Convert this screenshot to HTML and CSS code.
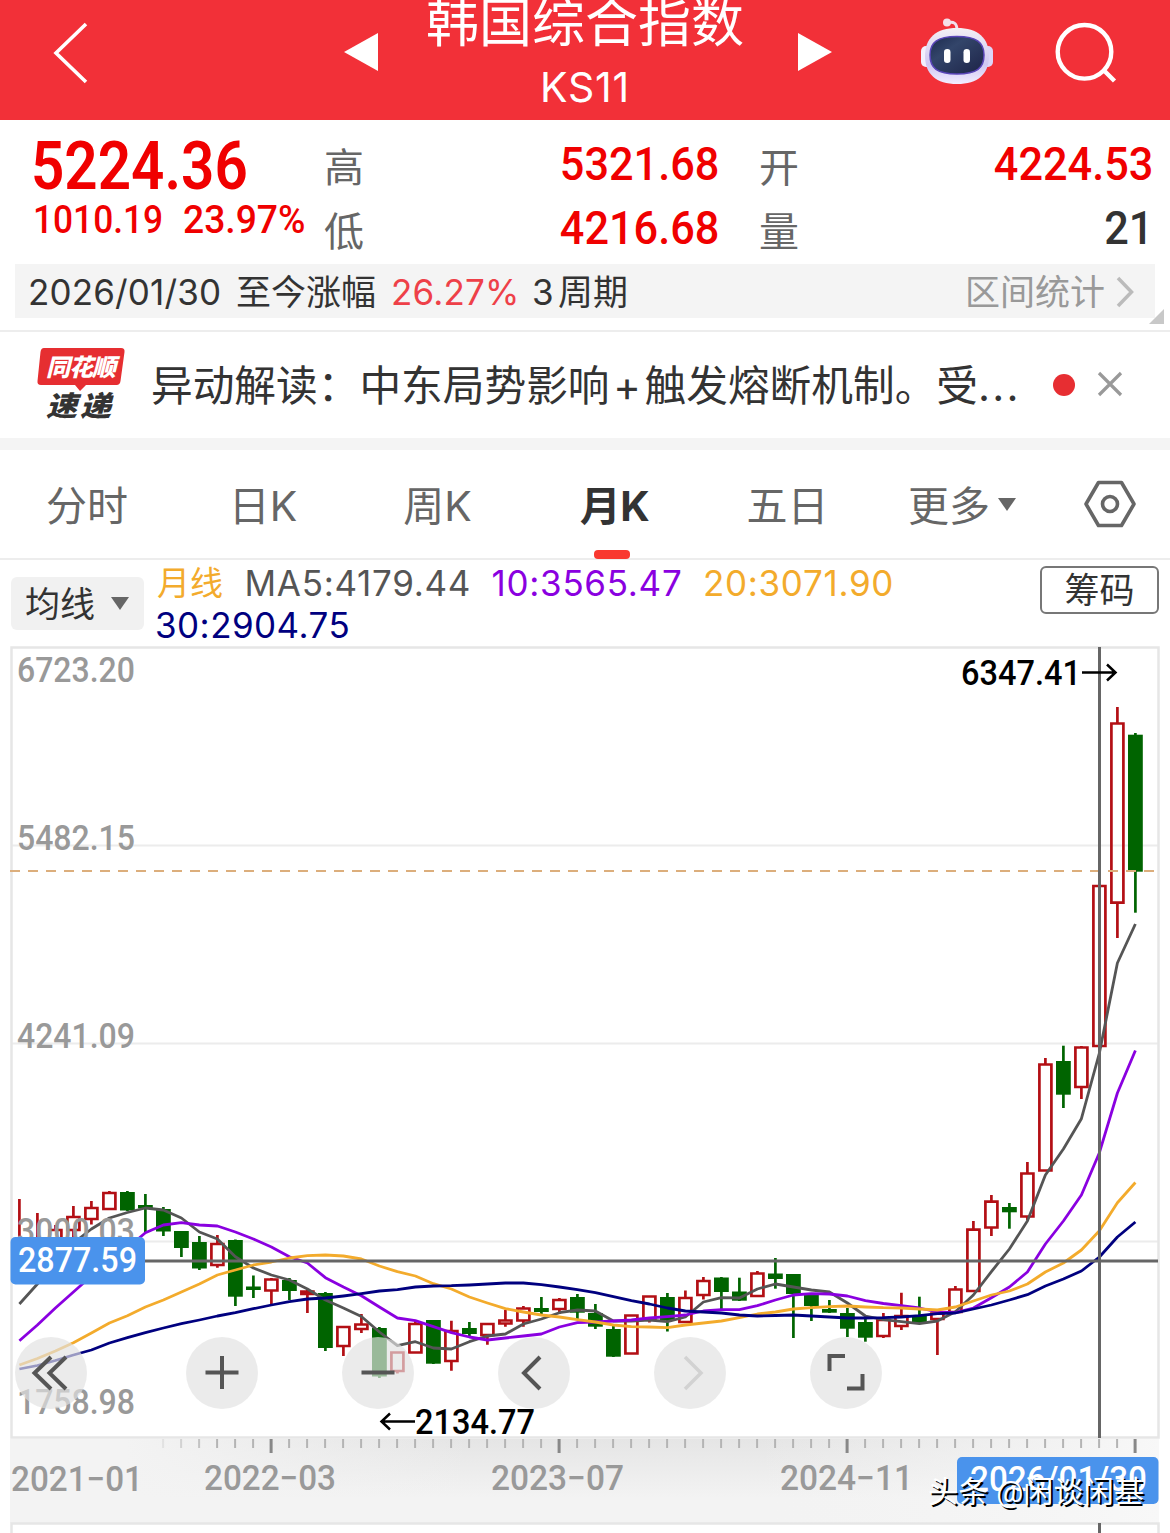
FILE: index.html
```html
<!DOCTYPE html>
<html lang="zh-CN">
<head>
<meta charset="utf-8">
<title>韩国综合指数 KS11</title>
<link rel="stylesheet" href="styles.css">
</head>
<body>
<header class="topbar">
  <svg class="back" width="40" height="66" viewBox="0 0 40 66"><path d="M35 4 5 33 35 62" fill="none" stroke="#fff" stroke-width="3.6"/></svg>
  <svg class="prev" width="34" height="38" viewBox="0 0 34 38"><path d="M34 0v38L0 19z" fill="#fff"/></svg>
  <div class="title">
    <h1>韩国综合指数</h1>
    <p>KS11</p>
  </div>
  <svg class="next" width="34" height="38" viewBox="0 0 34 38"><path d="M0 0v38l34-19z" fill="#fff"/></svg>
  <svg class="robot" width="76" height="70" viewBox="919 16 76 70">
    <defs>
      <linearGradient id="shell" x1="0" y1="0" x2="0" y2="1"><stop offset="0" stop-color="#f4f0f4"/><stop offset=".65" stop-color="#cfc6f2"/><stop offset="1" stop-color="#f3edff"/></linearGradient>
      <linearGradient id="visor" x1="0" y1="0" x2="1" y2="1"><stop offset="0" stop-color="#1c2a4e"/><stop offset=".35" stop-color="#33456a"/><stop offset="1" stop-color="#1d2347"/></linearGradient>
    </defs>
    <path d="M948 23c5-2 9 0 9 7" fill="none" stroke="#f1dfec" stroke-width="3"/>
    <circle cx="947" cy="22.500" r="4" fill="#f5dfe8"/>
    <rect x="921" y="46" width="12" height="21" rx="5" fill="#f3effc"/>
    <rect x="981" y="46" width="12" height="21" rx="5" fill="#dcd5f8"/>
    <path d="M957 28c21 0 32 10 32 28s-11 28-32 28-32-10-32-28 11-28 32-28z" fill="url(#shell)"/>
    <path d="M957 36.500c20 0 27 6 27 18.500 0 13-7 19-27 19s-27-6-27-19c0-12.500 7-18.500 27-18.500z" fill="url(#visor)" stroke="#5a45b8" stroke-width="1.500"/>
    <rect x="944" y="49" width="6.500" height="14" rx="3.200" fill="#fff"/>
    <rect x="963.500" y="49" width="6.500" height="14" rx="3.200" fill="#fff"/>
  </svg>
  <svg class="search" width="64" height="62" viewBox="1054 21 64 62"><g fill="none" stroke="#fff" stroke-width="4.400"><circle cx="1084.500" cy="51.800" r="26.800"/><path d="M1103 69.500 1114.500 81"/></g></svg>
</header>

<section class="quote">
  <div class="last">
    <div class="price"><span class="din">5224.36</span></div>
    <div class="change"><span class="din">1010.19</span><span class="din pct">23.97%</span></div>
  </div>
  <dl class="stats">
    <dt>高</dt><dd><span class="din">5321.68</span></dd>
    <dt>开</dt><dd><span class="din">4224.53</span></dd>
    <dt>低</dt><dd><span class="din">4216.68</span></dd>
    <dt>量</dt><dd class="neutral"><span class="din">21</span></dd>
  </dl>
</section>

<section class="range">
  <span class="r-date">2026/01/30</span><span class="r-label">至今涨幅</span><span class="r-pct">26.27%</span><span class="r-num">3</span><span>周期</span>
  <span class="r-link">区间统计</span>
  <svg width="18" height="32" viewBox="0 0 18 32"><path d="M2 2 15.500 16 2 30" fill="none" stroke="#bbb" stroke-width="3.500"/></svg>
  <i class="corner"></i>
</section>

<section class="news">
  <div class="logo">
    <svg width="90" height="48" viewBox="0 0 90 48"><path d="M8 1h77q4 0 3.500 4l-4 29q-.5 4-4 4H50l-6 6-5-6H5q-4 0-3.500-4l3-29Q5 1 8 1z" fill="#e62e31"/></svg>
    <b class="logo-a">同花顺</b>
    <b class="logo-b">速递</b>
  </div>
  <p>异动解读：中东局势影响<span class="plus">+</span>触发熔断机制。受<span class="dots">...</span></p>
  <i class="dot"></i>
  <svg class="close" width="26" height="26" viewBox="0 0 26 26"><path d="M2 2 24 24M24 2 2 24" stroke="#999" stroke-width="3.200"/></svg>
</section>

<nav class="tabs">
  <span>分时</span><span>日K</span><span>周K</span><span class="active">月K</span><span>五日</span>
  <span class="more">更多<i class="caret"></i></span>
  <svg width="52" height="48" viewBox="0 0 52 48"><g fill="none" stroke="#666" stroke-width="3.600"><path d="M14.500 2.500h23L50 24 37.500 45.500h-23L2 24z" stroke-linejoin="round"/><circle cx="26" cy="24" r="7.500"/></g></svg>
</nav>

<section class="ma">
  <div class="select">均线<i class="caret"></i></div>
  <div class="legend">
    <div><span class="c20 cn">月线</span><span class="c5">MA5:4179.44</span><span class="c10">10:3565.47</span><span class="c20">20:3071.90</span></div>
    <div><span class="c30">30:2904.75</span></div>
  </div>
  <div class="chips">筹码</div>
</section>

<svg class="chart" id="chart" width="1170" height="887" viewBox="0 646 1170 887"></svg>
<script src="chart.js"></script>
</body>
</html>
```
FILE: styles.css
```css
* { box-sizing: border-box; margin: 0; padding: 0; }
body {
  width: 1170px;
  height: 1533px;
  overflow: hidden;
  background: #fff;
  color: #333;
  font-family: Inter, "Noto Sans CJK SC", sans-serif;
}
svg { display: block; flex: none; }
i { font-style: normal; }
.din { display: inline-block; font-family: Roboto, sans-serif; transform: scaleX(.92); transform-origin: left; }

.topbar { display: flex; height: 120px; background: #f23038; color: #fff; }
.back { margin: 20px 0 0 51px; }
.prev { margin: 33px 0 0 253px; }
.title { width: 420px; padding-right: 6px; text-align: center; white-space: nowrap; }
.title h1 { margin-top: -9px; font-size: 53px; line-height: 64px; font-weight: 400; }
.title p { margin-top: 6px; font-size: 41px; line-height: 52px; letter-spacing: .8px; }
.next { margin-top: 33px; }
.robot { margin: 16px 0 0 87px; }
.search { margin: 21px 0 0 59px; }

.quote { display: flex; height: 144px; color: #f00000; white-space: nowrap; }
.last { width: 324px; padding-left: 31px; }
.price { height: 76px; padding-top: 10px; font-size: 66px; line-height: 70px; font-weight: 600; }
.price .din { transform: scaleX(.885); }
.change { display: flex; padding-left: 2px; font-size: 39px; line-height: 48px; font-weight: 500; }
.change .din { flex: none; width: 150px; transform: scaleX(.905); }
.change .pct { width: 124px; transform: scaleX(.955); }
.stats { display: grid; grid-template-columns: 60px 335px 100px 334px; grid-template-rows: 64px 64px; padding-top: 11px; line-height: 64px; }
.stats dt { color: #666; font-size: 40px; padding-top: 5px; }
.stats dt:nth-of-type(even) { padding-left: 40px; }
.stats dd { text-align: right; font-size: 47px; font-weight: 500; }
.stats .din { transform-origin: right; }
.stats .neutral { color: #333; }

.range { position: relative; display: flex; align-items: center; width: 1140px; height: 54px; margin-left: 15px; padding: 1px 0 0 13px; background: #f4f4f4; font-size: 35px; line-height: 52px; white-space: nowrap; }
.r-date { width: 208px; letter-spacing: .15px; }
.r-label { width: 155px; }
.r-pct { width: 141px; color: #ee4048; letter-spacing: .2px; }
.r-num { width: 26px; }
.r-link { margin-left: auto; padding-right: 11px; color: #999; }
.range svg { margin-right: 21px; }
.corner { position: absolute; right: -9px; bottom: -6px; border-left: 15px solid transparent; border-bottom: 15px solid #c8c8c8; }

.news { display: flex; align-items: center; height: 120px; margin-top: 12px; padding-left: 36px; border-top: 2px solid #ededed; border-bottom: 12px solid #f4f4f4; }
.logo { position: relative; width: 115px; height: 76px; white-space: nowrap; }
.logo b { position: absolute; font-style: italic; font-weight: 900; }
.logo-a { left: 10px; top: 6px; color: #fff; font-size: 24px; line-height: 30px; letter-spacing: -1px; }
.logo-b { left: 10px; top: 42px; color: #333; font-size: 31px; line-height: 34px; letter-spacing: 3px; transform: scaleY(.9); }
.news p { width: 902px; padding-top: 2px; font-size: 41.700px; line-height: 60px; white-space: nowrap; }
.plus { display: inline-block; width: 35px; text-align: center; }
.dots { letter-spacing: 2.200px; }
.dot { width: 22px; height: 22px; margin-right: 22px; border-radius: 50%; background: #e72e32; }
.close { margin-top: -2px; }

.tabs { display: grid; grid-template-columns: 174px 178px 171px 183px 163px 213px 60px; align-items: center; height: 110px; border-bottom: 2px solid #ededed; color: #666; font-size: 41px; line-height: 108px; text-align: center; }
.tabs span { padding-top: 2px; }
.tabs svg { margin: -2px 0 0 2px; }
.tabs .active { position: relative; color: #333; font-weight: 700; letter-spacing: -.4px; }
.active::after { content: ""; position: absolute; left: 71px; bottom: 1px; width: 36px; height: 9px; border-radius: 4px; background: #f9382f; }
.tabs .more { padding-left: 39px; text-align: left; }
.caret { display: inline-block; border: 9px solid transparent; border-top: 13px solid #666; border-bottom: 0; }
.more .caret { margin-left: 8px; vertical-align: 10px; }

.ma { display: flex; height: 86px; padding-left: 11px; }
.select { width: 133px; height: 53px; margin-top: 17px; padding: 1px 0 0 14px; border-radius: 6px; background: #f1f1f1; font-size: 35px; line-height: 53px; }
.select .caret { margin-left: 16px; vertical-align: 7px; }
.legend { width: 896px; padding: 3px 0 0 12px; font-size: 35px; line-height: 41px; letter-spacing: .7px; white-space: nowrap; }
.legend div { display: flex; gap: 20.500px; height: 42px; }
.cn { padding-left: 1px; margin-right: 1px; font-size: 33px; letter-spacing: 0; }
.c5 { color: #555; }
.c10 { color: #8a00e0; }
.c20 { color: #f3ab2c; }
.c30 { color: #00007f; letter-spacing: .45px; margin-left: -1px; }
.chips { width: 119px; height: 48px; margin-top: 6px; border: 2px solid #777; border-radius: 6px; font-size: 35px; line-height: 44px; text-align: center; }

.chart text { font-family: Roboto, "Noto Sans CJK SC", sans-serif; }
.num { font-size: 35px; font-weight: 500; }
.axis { fill: #999; }
.strong { fill: #000; }
.white { fill: #fff; }
.grid { stroke: #ececec; stroke-width: 2; fill: none; }
.frame { stroke: #e6e6e6; stroke-width: 2.500; fill: none; }
.up { stroke: #b30f14; fill: none; stroke-width: 2.700; }
.down { stroke: #006400; fill: #006400; stroke-width: 2.700; }
.line { fill: none; stroke-width: 2.800; stroke-linejoin: round; }
.cross { stroke: #666; stroke-width: 3; fill: none; }
.icon { stroke: #555; stroke-width: 4; fill: none; }
.mark { fill: #fff; font-size: 30px; font-weight: 400; text-shadow: 2px 2px 0 #000; }
```
FILE: chart.js
```js
// Each candle: kind (u/d), high, body top, body bottom, low, in chart units.
const candles = [
['u',1199,1240,1262,1270],['u',1213,1240,1262,1270],['u',1225,1230,1250,1255],['u',1206,1217,1230,1240],['u',1201,1208,1219,1224.5],
['u',1191,1193,1209,1210],['d',1191,1192,1210.5,1211],['d',1194,1205,1208.5,1232.7],['d',1207,1209,1231.5,1236],['d',1231,1231,1248,1257],
['d',1236,1242,1268.5,1270],['u',1235,1244,1265,1267.7],['d',1239.5,1240,1296.7,1306],['d',1275.5,1286.5,1290,1298],['u',1278,1279.5,1290.5,1304],
['d',1278,1280,1291,1300],['u',1289.5,1291.5,1294,1313],['d',1292,1293,1348,1351],['u',1326,1327,1346,1356],['u',1314,1324.5,1329,1333],
['d',1327,1328,1376.5,1378],['u',1352,1352.5,1371,1373.5],['u',1320.5,1324,1352.5,1353],['d',1320,1320,1363.7,1364],['u',1320.7,1331,1361,1370.7],
['d',1322,1328,1334,1336],['u',1323,1324,1335,1344.7],['u',1310,1320.5,1323.5,1326.7],['u',1306,1308.5,1320.5,1326.7],['d',1297,1308,1312,1314],
['u',1298,1300,1309,1314],['d',1294,1297,1312.7,1319],['d',1304,1313,1326.7,1329],['d',1326,1329,1356.7,1357],['u',1315,1315.5,1353.5,1354],
['u',1296,1296.5,1319,1322.5],['d',1293,1297,1320,1331.5],['u',1290.5,1298,1322,1322],['u',1277,1281,1295,1299.5],['d',1277,1277.5,1292,1311],
['d',1277.7,1291.5,1300.7,1301],['u',1271,1273.5,1296,1297],['d',1258,1273.5,1279,1288.7],['d',1274,1274,1294,1338],['d',1293,1295,1306,1321],
['d',1300,1309,1312.7,1313],['d',1308,1313,1328.7,1337],['d',1319,1322,1337.7,1341.7],['u',1313,1320,1336,1338],['u',1292.7,1316,1326,1330],
['d',1296.7,1316,1324,1324],['u',1312,1313.5,1319,1355],['u',1286,1289.5,1312,1313],['u',1221,1229.7,1291,1291],['u',1195,1201.7,1227.5,1236],
['d',1203,1207,1212.3,1228.7],['u',1162,1173.5,1216.5,1220],['u',1058,1064.5,1170.5,1171],['d',1045.7,1061,1094.7,1108],['u',1046,1047.5,1087,1099],
['u',886,886,1046,1046],['u',707,723.5,902.7,938],['d',733,734.7,871.7,912.7]];

const averages = {
'#555': [1304,1284,1262,1243,1229,1218,1212.5,1208,1210,1218,1232,1239,1256.7,1268,1275,1280,1289,1300,1308,1316.5,1332,1345.7,1341.7,1348,1349,1341.7,1336,1334,1324,1319,1312.7,1310,1311,1321,1321,1320,1321.7,1317,1302,1297.7,1298,1289,1284,1287,1290,1292,1303,1316,1319.6,1321.7,1323.7,1321,1311.7,1295,1271.7,1249,1221,1175,1149,1118.7,1053,963,924],
'#8a00e0': [1340.7,1325,1308,1292,1276,1262,1248,1232.7,1225,1222.7,1225,1226,1232,1239,1247,1256.7,1263,1277.7,1287,1295.7,1307,1318,1320.7,1326.7,1332.7,1337,1340,1338,1336,1334,1327,1322.7,1322,1321,1320,1318,1316.7,1315,1311,1309.7,1309.7,1305.7,1300,1295,1293.7,1294,1296,1300.7,1303.5,1305.7,1308,1312,1312.7,1308,1297.7,1287,1272,1244,1221,1195,1152.7,1093,1050.5],
'#f3ab2c': [1365,1358.5,1351,1342.7,1333,1323,1315.7,1307,1300,1292,1284,1275,1270,1265,1262,1258,1255.7,1255,1256,1259,1266,1271.7,1276,1283.7,1289,1297,1303,1308.7,1312,1315,1317,1319.7,1322,1325,1326.7,1327,1327.7,1325,1323,1321,1317.7,1314,1312,1309,1307.7,1306.7,1306,1307,1307.7,1308,1309,1310,1307,1301,1295,1291,1284,1272,1263,1250,1230.7,1202.7,1182.5],
'#00007f': [1369,1365.5,1360.5,1355,1350,1343,1337.7,1332.7,1328,1323.7,1320,1316,1312.7,1308.7,1305,1301.7,1299,1298,1296,1293.7,1291,1289.7,1287,1286,1285.7,1285,1284,1283,1283,1284.7,1287,1289.7,1292.7,1296.7,1300.7,1304,1308,1311,1312,1313,1315,1316,1315.5,1315,1316,1317,1318,1318,1317.7,1317,1315.7,1313.7,1313,1309,1305,1300,1294.7,1286,1279,1271,1257,1237,1222]
};
const cx = i => 19.4 + 18 * i;
const label = (x, y, w, cls, s) =>
  `<text class="num ${cls}" x="${x}" y="${y}" textLength="${w}" lengthAdjust="spacingAndGlyphs">${s}</text>`;

let out = `<defs>
<linearGradient id="fade" x1="0" y1="0" x2="0" y2="1"><stop offset="0" stop-color="#e5e5e5"/><stop offset=".7" stop-color="#f3f3f3"/></linearGradient>
<linearGradient id="side" x1="0" y1="0" x2="1" y2="0"><stop offset="0" stop-color="#f3f3f3"/><stop offset=".1" stop-color="#f3f3f3"/><stop offset=".4" stop-color="#f3f3f3" stop-opacity="0"/><stop offset=".65" stop-color="#f3f3f3" stop-opacity="0"/><stop offset="1" stop-color="#f8f8f8"/></linearGradient></defs>
<rect x="10" y="1439" width="1149" height="84" fill="url(#fade)"/><rect x="10" y="1439" width="1149" height="84" fill="url(#side)"/>
<path class="grid" d="M11 845.500H1158M11 1043.500H1158M11 1241.500H1158"/>
<path class="frame" d="M11.500 647.500H1158.500V1437.500H11.500zM11.500 1533V1523.500H1158.500V1533"/>`;

candles.forEach(([k, hi, top, bot, lo], i) => {
  const x = cx(i);
  out += k === 'u'
    ? `<path class="up" d="M${x} ${hi}V${top}M${x} ${bot}V${lo}M${x-6} ${top}h12V${bot}h-12z"/>`
    : `<path class="down" d="M${x} ${hi}V${lo}"/><rect x="${x-7.4}" y="${top}" width="14.800" height="${bot-top}" fill="#006400"/>`;
});
out += `<path d="M10 871H1158" stroke="#dcae7c" stroke-width="2" stroke-dasharray="10 8"/>`;
for (const [color, ys] of Object.entries(averages))
  out += `<polyline class="line" stroke="${color}" points="${ys.map((y, i) => cx(i) + ',' + y).join(' ')}"/>`;

out += label(17,682,118,'axis','6723.20') + label(17,850,118,'axis','5482.15') + label(17,1048,118,'axis','4241.09')
  + label(17,1243,118,'axis','3000.03') + label(17,1413.5,118,'axis','1758.98');

for (let i = 8; i <= 62; i++) {
  const big = i % 16 === 14;
  out += `<path d="M${cx(i)-.3} 1439V${big ? 1453 : 1448}" stroke="${big ? '#888' : '#b4b4b4'}" stroke-width="${big ? 3 : 2}" opacity="${Math.min(1, (i - 7) / 4)}"/>`;
}
out += `<path class="cross" d="M144 1261H1158M1099.500 647V1438M1099.500 1523V1533"/>
<rect x="10.500" y="1237" width="134.500" height="47.500" rx="5" fill="#4a93ec"/>` + label(18,1272,119,'white','2877.59')
+ label(961,685,120,'strong','6347.41') + label(415,1434,120,'strong','2134.77')
+ `<path d="M1082 672.500H1115M1107 664.500l8.500 8-8.500 8M415 1421.500H382M390 1413.500l-8.500 8 8.500 8" stroke="#000" stroke-width="2.500" fill="none"/>`
+ label(11,1491,132,'axis','2021−01') + label(204,1490,132,'axis','2022−03') + label(491,1490,133,'axis','2023−07') + label(780,1490,133,'axis','2024−11');

const icons = ['M51 1357 34.500 1373 51 1389M66 1357 49.500 1373 66 1389','M205.500 1372.500h33M222 1356v33','M361.500 1372.500h33',
  'M540 1357 524 1373 540 1389','','M845 1356H829.500V1371M847 1388.500H862.500V1374'];
icons.forEach((d, n) => {
  out += `<circle cx="${n ? 66 + 156 * n : 51}" cy="1373" r="36" fill="rgb(226,226,226)" fill-opacity=".68"/><path class="icon" d="${d}"/>`;
});
out += `<path d="M685 1357 701 1373 685 1389" fill="none" stroke="#d2d2d2" stroke-width="3.500"/>
<rect x="957" y="1457" width="201.500" height="47" rx="5" fill="#4a93ec"/>` + label(970,1491,177,'white','2026/01/30')
+ `<text class="mark" x="928" y="1502" textLength="216">头条 @闲谈闲基</text>`;
document.getElementById('chart').innerHTML = out;
```
